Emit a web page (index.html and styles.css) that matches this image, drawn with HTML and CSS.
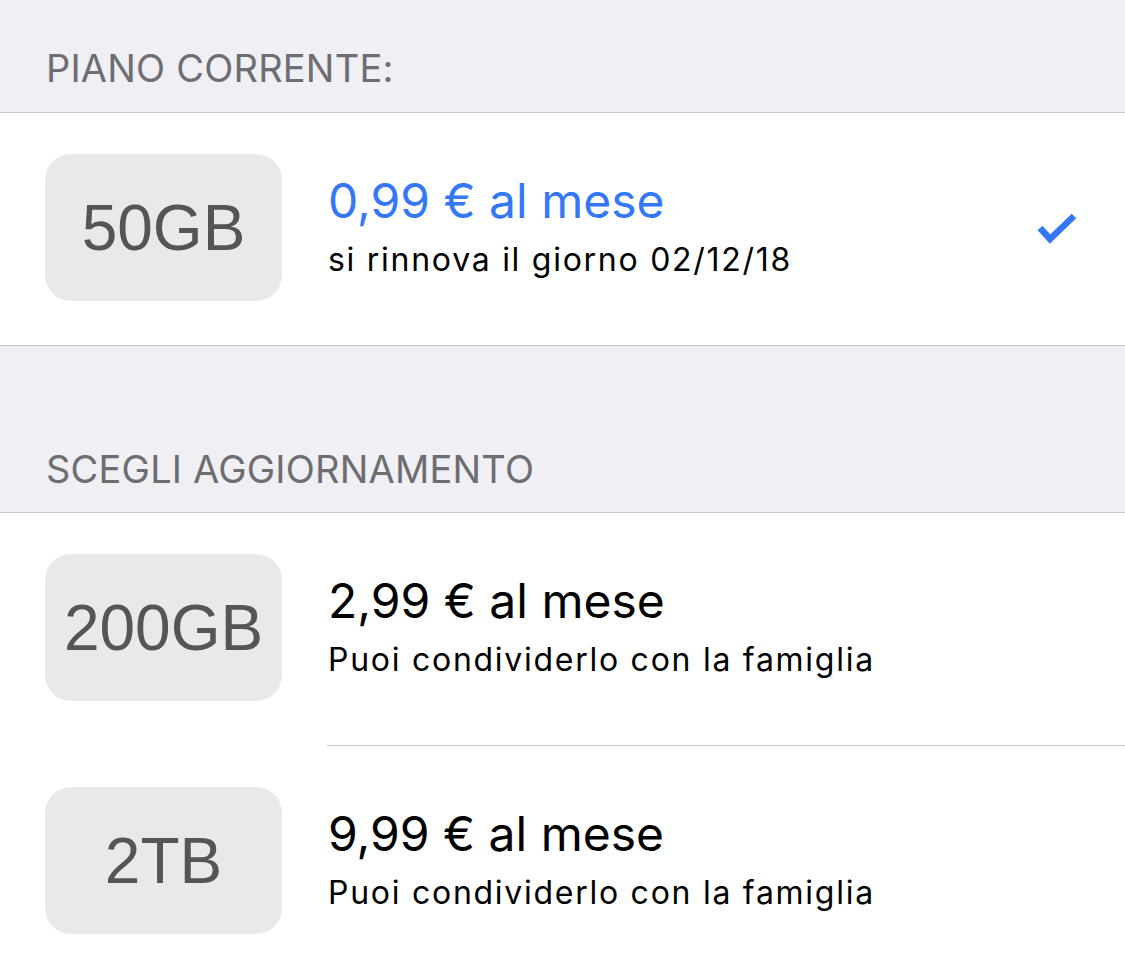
FILE: index.html
```html
<!DOCTYPE html>
<html lang="it">
<head>
<meta charset="utf-8">
<title>Piano</title>
<link rel="stylesheet" href="styles.css">
</head>
<body>
  <div class="group-header first">
    <span class="group-title">PIANO CORRENTE:</span>
  </div>
  <div class="list">
    <div class="row">
      <div class="badge">50GB</div>
      <div class="info">
        <div class="price current">0,99 € al mese</div>
        <div class="sub">si rinnova il giorno 02/12/18</div>
      </div>
      <svg class="check" width="40" height="32" viewBox="0 0 40 32">
        <polyline points="3,15 13,26 37,3" fill="none" stroke="#3478f6" stroke-width="6.5" stroke-linecap="butt" stroke-linejoin="miter"/>
      </svg>
    </div>
  </div>
  <div class="group-header second">
    <span class="group-title">SCEGLI AGGIORNAMENTO</span>
  </div>
  <div class="list">
    <div class="row">
      <div class="badge">200GB</div>
      <div class="info">
        <div class="price">2,99 € al mese</div>
        <div class="sub">Puoi condividerlo con la famiglia</div>
      </div>
    </div>
    <div class="row">
      <div class="badge">2TB</div>
      <div class="info">
        <div class="price">9,99 € al mese</div>
        <div class="sub">Puoi condividerlo con la famiglia</div>
      </div>
    </div>
  </div>
</body>
</html>
```
FILE: styles.css
```css
html, body {
  margin: 0;
  padding: 0;
}
body {
  background: #ffffff;
  font-family: Inter, "Noto Sans", "Liberation Sans", sans-serif;
  width: 1125px;
  height: 975px;
  overflow: hidden;
}
.group-header {
  background: #efeff4;
  border-bottom: 1px solid #c8c7cc;
  padding-left: 46px;
  display: flex;
  align-items: flex-end;
  box-sizing: border-box;
}
.group-header.first {
  height: 113px;
  padding-bottom: 20px;
}
.group-header.second {
  height: 168px;
  border-top: 1px solid #c8c7cc;
  padding-bottom: 19px;
}
.group-title {
  font-size: 38px;
  line-height: 48px;
  color: #6d6d72;
  letter-spacing: 0.2px;
}
.list {
  background: #ffffff;
}
.row {
  height: 232px;
  display: flex;
  align-items: center;
  padding-left: 45px;
  padding-right: 48px;
  box-sizing: border-box;
  position: relative;
}
.row + .row::before {
  content: "";
  position: absolute;
  top: 0;
  left: 327px;
  right: 0;
  height: 1px;
  background: #c8c7cc;
}
.row + .row {
  height: 233px;
  padding-top: 1px;
}
.badge {
  width: 237px;
  height: 147px;
  border-radius: 26px;
  background: #e9e9e9;
  color: #555555;
  font-family: "Liberation Sans", Arial, sans-serif;
  font-size: 64px;
  display: flex;
  align-items: center;
  justify-content: center;
  flex: none;
  margin-top: -3px;
}
.info {
  margin-left: 46px;
  flex: 1;
  display: flex;
  flex-direction: column;
  margin-top: -5px;
}
.price {
  font-size: 48px;
  line-height: 56px;
  color: #000000;
}
.price.current {
  color: #3478f6;
}
.sub {
  font-size: 32px;
  line-height: 40px;
  letter-spacing: 1.73px;
  margin-top: 11px;
  color: #000000;
}
.check {
  flex: none;
}
```
